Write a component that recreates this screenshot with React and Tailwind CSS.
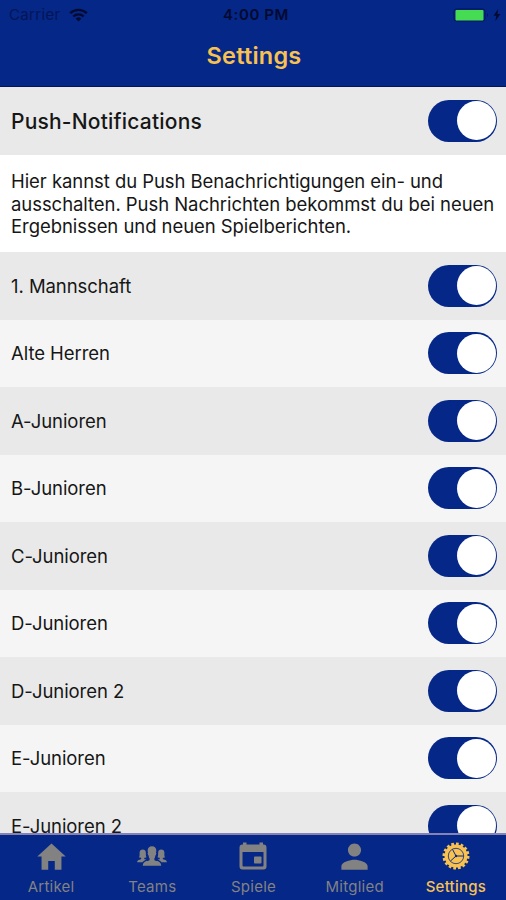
import { useState } from 'react';
import { IoMdHome, IoIosPeople, IoMdPerson } from 'react-icons/io';

const teams = [
  '1. Mannschaft',
  'Alte Herren',
  'A-Junioren',
  'B-Junioren',
  'C-Junioren',
  'D-Junioren',
  'D-Junioren 2',
  'E-Junioren',
  'E-Junioren 2',
];

const CalendarIcon = () => (
  <svg width="28" height="28" viewBox="0 0 28 28" fill="currentColor">
    <path
      fillRule="evenodd"
      d="M4 .5h3.5v2h13v-2H24v2h.5A3 3 0 0 1 27.5 5.5v19a3 3 0 0 1-3 3h-21a3 3 0 0 1-3-3v-19a3 3 0 0 1 3-3H4zM3.5 10v13.5a1 1 0 0 0 1 1h19a1 1 0 0 0 1-1V10z"
    />
    <rect x="15" y="14.5" width="7.5" height="7" rx=".8" />
  </svg>
);

// Solid gear with a thin inner ring and three spokes cut into it
const GearIcon = () => (
  <svg width="28" height="28" viewBox="0 0 28 28" fill="none">
    <circle cx="14" cy="14" r="11.5" fill="currentColor" />
    <circle cx="14" cy="14" r="12" stroke="currentColor" strokeWidth="3" pathLength="64" strokeDasharray="2.3 1.7" />
    <circle cx="14" cy="14" r="7.7" stroke="#052788" strokeWidth="0.8" />
    <path d="M14 14 10.5 7.4M14 14h7.5M14 14l-5.5 5" stroke="#052788" strokeWidth="1" />
    <circle cx="14" cy="14" r="1.2" fill="#052788" />
  </svg>
);

const tabs = [
  { label: 'Artikel', icon: <IoMdHome size={35} /> },
  { label: 'Teams', icon: <IoIosPeople size={34} /> },
  { label: 'Spiele', icon: <CalendarIcon /> },
  { label: 'Mitglied', icon: <IoMdPerson size={35} /> },
  { label: 'Settings', icon: <GearIcon />, active: true },
];

const Toggle = ({ label }) => {
  const [on, setOn] = useState(true);

  return (
    <button
      role="switch"
      aria-checked={on}
      aria-label={label}
      onClick={() => setOn(!on)}
      className={`flex h-[42px] w-[69px] shrink-0 items-center rounded-full px-[1.5px] ${
        on ? 'justify-end bg-[#052788]' : 'justify-start bg-gray-300'
      }`}
    >
      <span className="size-[39px] rounded-full bg-white" />
    </button>
  );
};

const StatusBar = () => (
  <div className="grid h-[27px] grid-cols-3 items-center pt-[3px] pr-[5px] pl-[9px] text-[15px] text-[#020a30]">
    <div className="flex items-center gap-[8px]">
      <span className="tracking-[0.35px] text-[#031555]">Carrier</span>
      <svg width="19" height="14" viewBox="0 0 19 14" fill="none" stroke="currentColor" strokeWidth="2.4">
        <path d="M1.2 5.2a12 12 0 0 1 16.6 0" />
        <path d="M4.3 8.5a7.5 7.5 0 0 1 10.4 0" />
        <path d="M9.5 13.4 6.7 10.7a4 4 0 0 1 5.6 0z" fill="currentColor" stroke="none" />
      </svg>
    </div>
    <span className="pl-[2px] text-center font-semibold tracking-[0.6px]">4:00 PM</span>
    <div className="flex items-center justify-end gap-[3px]">
      <svg width="37" height="14" viewBox="0 0 37 14">
        <rect x="1" y="1" width="31" height="12" rx="2.5" fill="none" stroke="#031555" />
        <rect x="2.5" y="2" width="28" height="10.5" rx="1" fill="#45dc54" />
        <path d="M34 5v4q2-2 0-4z" fill="#031555" />
      </svg>
      <svg width="8" height="12" viewBox="0 0 8 12" fill="currentColor">
        <path d="M5.2 0 .5 6.8h2.8L2.4 12l5-7H4.5z" />
      </svg>
    </div>
  </div>
);

const App = () => {
  return (
    <div className="flex h-[900px] w-[506px] flex-col overflow-hidden bg-white font-['Inter',sans-serif] text-[#161616]">
      <header className="h-[87px] shrink-0 border-b border-[#03155c] bg-[#052788]">
        <StatusBar />
        <h1 className="pt-[11px] pl-[2px] text-center text-[23.5px] leading-[36px] font-semibold tracking-[0.2px] text-[#f8c150]">
          Settings
        </h1>
      </header>

      <main className="min-h-0 flex-1 overflow-hidden">
        <div className="flex h-[67.5px] items-center justify-between bg-[#e9e9e9] pr-[9px] pl-[11px]">
          <h2 className="pt-[2px] text-[21px] font-medium tracking-[0.2px]">Push-Notifications</h2>
          <Toggle label="Push-Notifications" />
        </div>

        <p className="h-[97.5px] pt-[15.5px] pl-[11px] text-[18.5px] leading-[22.5px] tracking-[-0.06px] whitespace-nowrap">
          Hier kannst du Push Benachrichtigungen ein- und
          <br />
          ausschalten. Push Nachrichten bekommst du bei neuen
          <br />
          Ergebnissen und neuen Spielberichten.
        </p>

        <ul>
          {teams.map((team) => (
            <li
              key={team}
              className="flex h-[67.5px] items-center justify-between bg-[#f5f5f5] pr-[9px] pl-[11px] text-[18.5px] tracking-[-0.06px] odd:bg-[#e9e9e9]"
            >
              <span className="pt-[2px]">{team}</span>
              <Toggle label={team} />
            </li>
          ))}
        </ul>
      </main>

      {/* Bottom tabs */}
      <nav className="grid h-[67px] shrink-0 grid-cols-5 border-t-2 border-[#8583b5] bg-[#052788]">
        {tabs.map(({ label, icon, active }) => (
          <a
            key={label}
            href="#"
            className={`flex flex-col items-center pt-[3px] pl-px text-[15px] ${
              active ? 'font-medium text-[#f8c150]' : 'text-[#828282]'
            }`}
          >
            <span className="flex h-[36px] items-center">{icon}</span>
            <span className="pt-px leading-[24px] tracking-[0.25px]">{label}</span>
          </a>
        ))}
      </nav>
    </div>
  );
};

export default App;
